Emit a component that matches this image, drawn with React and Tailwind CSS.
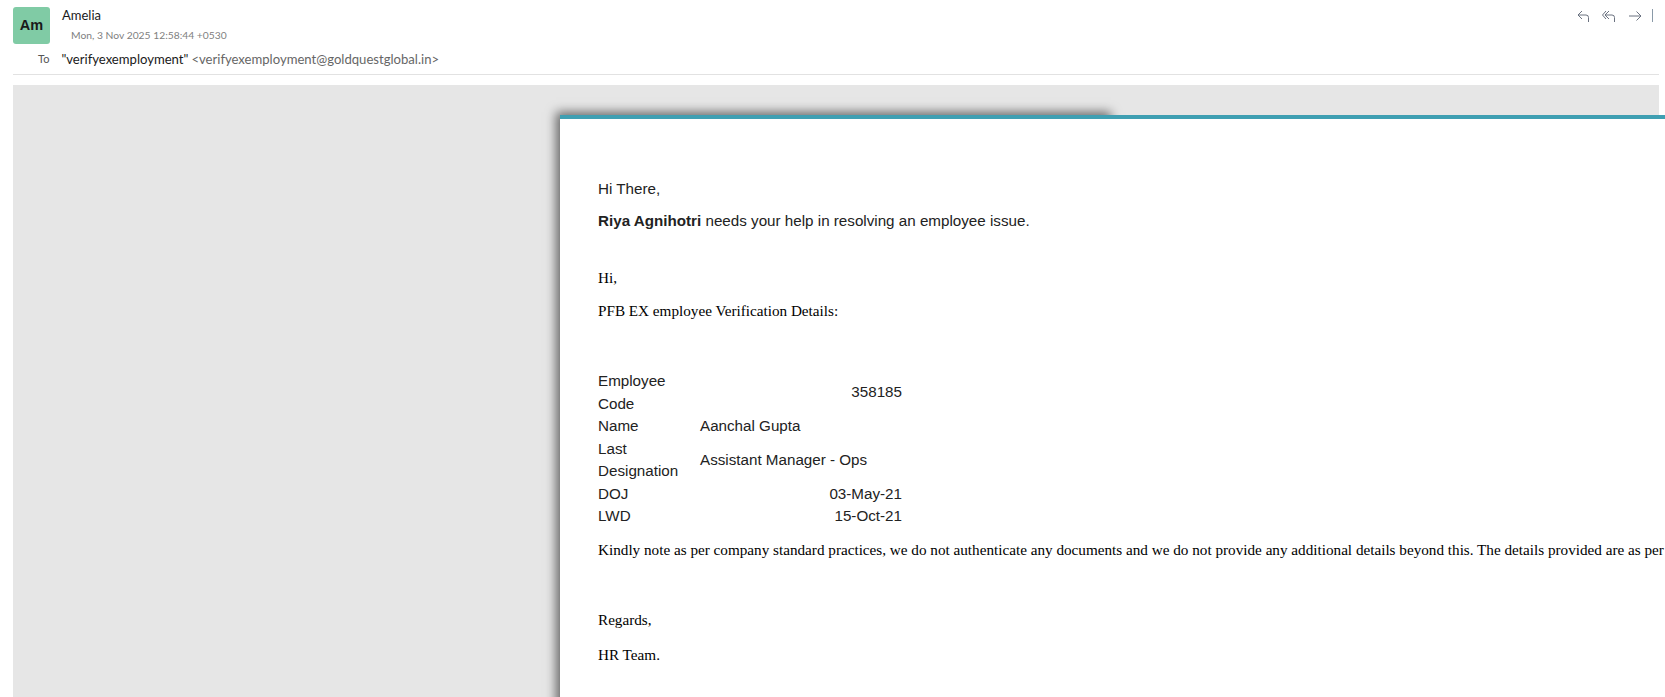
import React from "react";

const lato = "font-['Lato',sans-serif]";
const arial = "font-['Liberation_Sans',Arial,sans-serif]";
const times = "font-['Liberation_Serif','Times_New_Roman',serif]";

const ReplyIcon = () => (
  <svg width="14" height="14" viewBox="0 0 14 14" fill="none" stroke="#6b7280" strokeWidth="1">
    <path d="M6 2 L2 6 L6 10" />
    <path d="M2 6 H10 Q12.5 6 12.5 8.5 V13" />
  </svg>
);

const ReplyAllIcon = () => (
  <svg width="14" height="14" viewBox="0 0 14 14" fill="none" stroke="#6b7280" strokeWidth="1">
    <path d="M4 2 L0.5 6 L4 10" />
    <path d="M7 2 L3 6 L7 10" />
    <path d="M3 6 H10 Q12.5 6 12.5 8.5 V13" />
  </svg>
);

const ForwardIcon = () => (
  <svg width="14" height="14" viewBox="0 0 14 14" fill="none" stroke="#6b7280" strokeWidth="1">
    <path d="M8.5 2.5 L13 7 L8.5 11.5" />
    <path d="M1 7 H13" />
  </svg>
);

const EmailHeader = () => (
  <div className={`${lato} ml-[13px] mr-[6px] h-[75px] border-b border-[#e2e2e2]`}>
    <div className="flex pt-[7px]">
      <div className={`${arial} w-[37px] h-[37px] rounded-[3px] bg-[#80cba5] flex items-center justify-center text-[14.5px] font-semibold text-[#1a1a1a]`}>
        Am
      </div>
      <div className="ml-[12px]">
        <div className="text-[13px] leading-[16px] text-[#1a1a1a]">Amelia</div>
        <div className="ml-[9px] mt-[5px] text-[10.3px] leading-[14px] text-[#808080]">
          Mon, 3 Nov 2025 12:58:44 +0530
        </div>
      </div>
      <div className="ml-auto mr-[6px] flex items-start gap-[12px] pt-[2px]">
        <ReplyIcon />
        <ReplyAllIcon />
        <ForwardIcon />
        <div className="w-px h-[13px] bg-[#8a9aa8] -ml-[2px]" />
      </div>
    </div>
    <div className="flex items-center mt-[7px]">
      <span className="ml-[25px] text-[11px] leading-[16px] text-[#555]">To</span>
      <span className="ml-[12px] text-[13.1px] leading-[16px] text-[#1a1a1a]">"verifyexemployment"</span>
      <span className="ml-[3px] text-[13.1px] leading-[16px] text-[#666]">
        &lt;verifyexemployment@goldquestglobal.in&gt;
      </span>
    </div>
  </div>
);

const rows = [
  { label: "Employee Code", value: "358185", right: true },
  { label: "Name", value: "Aanchal Gupta" },
  { label: "Last Designation", value: "Assistant Manager - Ops" },
  { label: "DOJ", value: "03-May-21", right: true },
  { label: "LWD", value: "15-Oct-21", right: true },
];

const EmployeeTable = () => (
  <div className={`${arial} grid grid-cols-[102px_202px] w-[304px] text-[15.2px] leading-[22.5px] text-[#222] whitespace-normal`}>
    {rows.map((row) => (
      <React.Fragment key={row.label}>
        <div className="w-[85px]">{row.label}</div>
        <div className={`self-center ${row.right ? "text-right" : ""}`}>{row.value}</div>
      </React.Fragment>
    ))}
  </div>
);

export default function App() {
  return (
    <div className="w-full h-[697px] overflow-hidden bg-white">
      <EmailHeader />
      <div className="ml-[13px] mr-[6px] mt-[10px] h-[700px] bg-[#e6e6e6] pt-[30px] pl-[547px]">
        <div className="w-[549px] h-[700px] shadow-[-1px_0_10px_3px_rgba(0,0,0,0.55)]">
          <div className="w-[1200px] h-[700px] bg-white border-t-4 border-[#3f9fb2] pl-[38px] pt-[59px]">
            <div className={`${arial} text-[15.2px] leading-[22px] text-[#222]`}>
              <p>Hi There,</p>
              <p className="mt-[10px]">
                <b>Riya Agnihotri</b> needs your help in resolving an employee issue.
              </p>
            </div>
            <div className={`${times} text-[15.2px] leading-[18px] text-black whitespace-nowrap`}>
              <p className="mt-[37px]">Hi,</p>
              <p className="mt-[15px]">PFB EX employee Verification Details:</p>
              <div className="mt-[50px]">
                <EmployeeTable />
              </div>
              <p className="mt-[13px]">
                Kindly note as per company standard practices, we do not authenticate any documents and we do not provide any additional details beyond this. The details provided are as per our records.
              </p>
              <p className="mt-[52px]">Regards,</p>
              <p className="mt-[17px]">HR Team.</p>
            </div>
          </div>
        </div>
      </div>
    </div>
  );
}
